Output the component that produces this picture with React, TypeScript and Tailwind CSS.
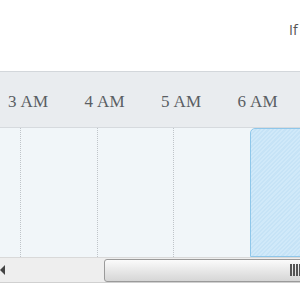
export default function App() {
  const hours = ["3 AM", "4 AM", "5 AM", "6 AM"];

  return (
    <div className="w-[300px] h-[300px] overflow-hidden bg-white relative">
      {/* top toolbar strip */}
      <div className="h-[71px] flex items-start pt-[19px] pl-[289px]">
        <span className="font-['Open_Sans',sans-serif] text-[14px] text-[#555] whitespace-nowrap">
          If
        </span>
      </div>

      {/* timeline */}
      <div className="border-t border-[#d3d7db]">
        {/* hour header */}
        <div className="h-[56px] bg-[#e9ecef] border-b border-[#d6dade] flex items-center pt-[4px]">
          {hours.map((h) => (
            <div
              key={h}
              className="w-[76.5px] shrink-0 pl-[8px] font-['Liberation_Serif',serif] text-[17px] tracking-[0.3px] text-[#5a5e63] whitespace-nowrap"
            >
              {h}
            </div>
          ))}
        </div>

        {/* body */}
        <div className="h-[129px] bg-[#f1f6f9] flex -ml-[56.5px]">
          {[0, 1, 2, 3].map((i) => (
            <div
              key={i}
              className={`w-[76.5px] shrink-0 ${i > 0 ? "border-l border-dotted border-[#bfc4c9]" : ""}`}
            />
          ))}
          <div className="w-[80px] shrink-0 rounded-tl-[5px] border border-[#8fc7ea] bg-[repeating-linear-gradient(135deg,#c6e3f6_0px,#c6e3f6_1.5px,#d0e9f9_1.5px,#d0e9f9_3px)]" />
        </div>

        {/* horizontal scrollbar */}
        <div className="h-[26px] bg-[#eeeeee] border-t border-[#d9d9d9] border-b border-b-[#d0d0d0] flex items-center">
          <div className="w-[6px] h-full flex items-center">
            <div className="w-0 h-0 border-y-[5px] border-y-transparent border-r-[5px] border-r-[#444]" />
          </div>
          <div className="ml-[98px] flex-1 h-[23px] rounded-[3px] border border-[#9a9a9a] bg-[linear-gradient(#fbfbfb,#e6e6e6_55%,#d6d6d6)] flex items-center justify-end -mr-[10px]">
            <div className="flex gap-[1px] mr-[8px]">
              {[0, 1, 2, 3].map((i) => (
                <div key={i} className="w-[2px] h-[12px] bg-[#555]" />
              ))}
            </div>
          </div>
        </div>
      </div>
    </div>
  );
}
